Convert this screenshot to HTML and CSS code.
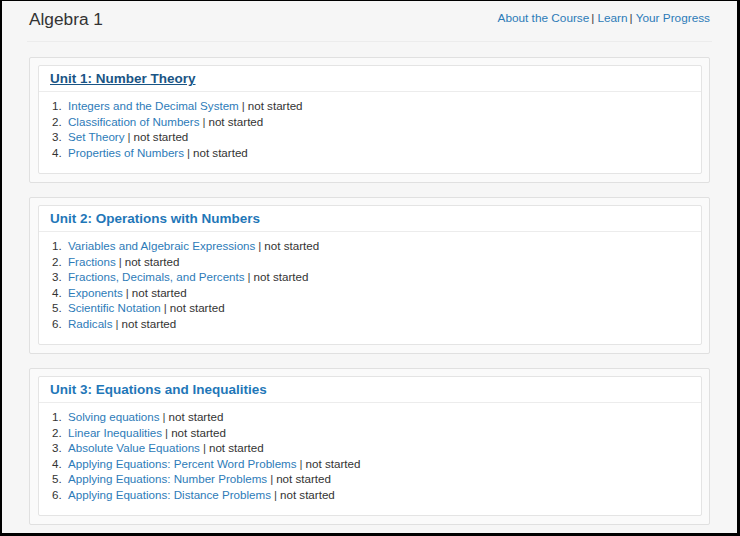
FILE: index.html
```html
<!DOCTYPE html>
<html>
<head>
<meta charset="utf-8">
<title>Algebra 1</title>
<link rel="stylesheet" href="styles.css">
</head>
<body>
<div class="frame">
  <header class="header">
    <h1 class="course-title">Algebra 1</h1>
    <nav class="nav">
      <a href="#">About the Course</a><span class="sep">|</span><a href="#">Learn</a><span class="sep">|</span><a href="#">Your Progress</a>
    </nav>
  </header>

  <main class="units">
    <section class="unit">
      <div class="unit-inner">
        <h2 class="unit-title"><a href="#" class="active">Unit 1: Number Theory</a></h2>
        <ol class="lessons">
          <li><a href="#">Integers and the Decimal System</a><span class="sep">|</span>not started</li>
          <li><a href="#">Classification of Numbers</a><span class="sep">|</span>not started</li>
          <li><a href="#">Set Theory</a><span class="sep">|</span>not started</li>
          <li><a href="#">Properties of Numbers</a><span class="sep">|</span>not started</li>
        </ol>
      </div>
    </section>

    <section class="unit">
      <div class="unit-inner">
        <h2 class="unit-title"><a href="#">Unit 2: Operations with Numbers</a></h2>
        <ol class="lessons">
          <li><a href="#">Variables and Algebraic Expressions</a><span class="sep">|</span>not started</li>
          <li><a href="#">Fractions</a><span class="sep">|</span>not started</li>
          <li><a href="#">Fractions, Decimals, and Percents</a><span class="sep">|</span>not started</li>
          <li><a href="#">Exponents</a><span class="sep">|</span>not started</li>
          <li><a href="#">Scientific Notation</a><span class="sep">|</span>not started</li>
          <li><a href="#">Radicals</a><span class="sep">|</span>not started</li>
        </ol>
      </div>
    </section>

    <section class="unit">
      <div class="unit-inner">
        <h2 class="unit-title"><a href="#">Unit 3: Equations and Inequalities</a></h2>
        <ol class="lessons">
          <li><a href="#">Solving equations</a><span class="sep">|</span>not started</li>
          <li><a href="#">Linear Inequalities</a><span class="sep">|</span>not started</li>
          <li><a href="#">Absolute Value Equations</a><span class="sep">|</span>not started</li>
          <li><a href="#">Applying Equations: Percent Word Problems</a><span class="sep">|</span>not started</li>
          <li><a href="#">Applying Equations: Number Problems</a><span class="sep">|</span>not started</li>
          <li><a href="#">Applying Equations: Distance Problems</a><span class="sep">|</span>not started</li>
        </ol>
      </div>
    </section>
  </main>
</div>
</body>
</html>
```

FILE: styles.css
```css
html {
  background: #000;
  height: 100%;
}

body {
  margin: 1px 3px 3px 2px;
  height: calc(100% - 4px);
  background: #f6f6f6;
  overflow: hidden;
  font-family: "Liberation Sans", Arial, Helvetica, sans-serif;
  color: #333;
}

.frame {
  padding: 0 25px 0 25px;
}

a {
  color: #2d7bb8;
  text-decoration: none;
}

.header {
  display: flex;
  justify-content: space-between;
  align-items: flex-start;
  height: 40px;
  border-bottom: 1px solid #ececec;
  margin: 0 0 15px;
}

.course-title {
  margin: 7px 0 0 2px;
  font-size: 17.3px;
  font-weight: normal;
  line-height: 22px;
  color: #333;
}

.nav {
  margin: 10px 2px 0 0;
  font-size: 11.8px;
  line-height: 14px;
}

.sep {
  color: #444;
  margin: 0 3px 0 2px;
}

.lessons .sep {
  margin: 0 3px;
}

.units {
  display: flex;
  flex-direction: column;
  gap: 14px;
}

.unit {
  margin: 0 2px;
  padding: 7px 7px 8px 8px;
  background: #fafafa;
  border: 1px solid #e0e0e0;
  border-radius: 2px;
}

.unit-inner {
  background: #fff;
  border: 1px solid #e4e4e4;
  border-radius: 2px;
}

.unit-title {
  margin: 0;
  padding: 4px 11px 3px;
  height: 18px;
  line-height: 18px;
  font-size: 13.5px;
  font-weight: bold;
  border-bottom: 1px solid #ececec;
}

.unit-title a {
  color: #1f77b8;
}

.unit-title a.active {
  color: #1a5585;
  text-decoration: underline;
}

.lessons {
  margin: 0;
  padding: 6px 0 13px 13px;
  font-size: 11.6px;
  line-height: 15.5px;
  list-style: none;
  counter-reset: lesson;
}

.lessons li {
  counter-increment: lesson;
  display: flex;
  align-items: baseline;
}

.lessons li::before {
  content: counter(lesson) ".";
  width: 16px;
  flex: none;
  color: #333;
}
```
